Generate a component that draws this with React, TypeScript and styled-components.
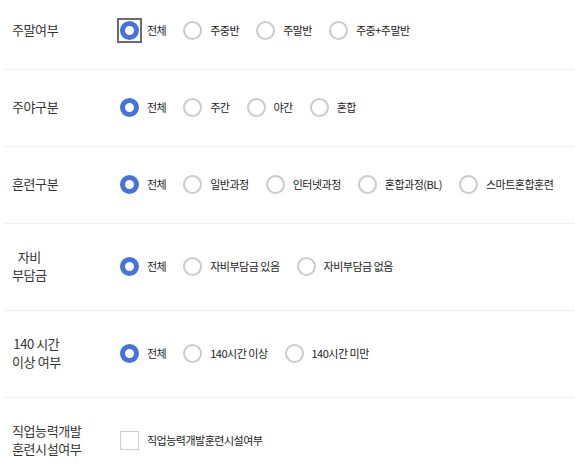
import { createGlobalStyle } from "styled-components";
import styled from "styled-components";
import { useState } from "react";

const GlobalStyle = createGlobalStyle`
  body {
    margin: 0;
    background: #fff;
    font-family: "Noto Sans CJK KR", "Noto Sans", sans-serif;
    color: #222;
  }
`

const Wrapper = styled.div`
  padding-left: 4px;
`

const Row = styled.div<{ $first?: boolean }>`
  display: flex;
  align-items: center;
  padding: ${p => (p.$first ? "17px" : "24px")} 0 26px 8px;
  border-bottom: 1px solid #efefef;
`

const Label = styled.div`
  display: flex;
  width: 108px;
  flex-shrink: 0;
`

const LabelText = styled.span`
  display: block;
  text-align: center;
  font-size: 13px;
  line-height: 18px;
  letter-spacing: -0.4px;
  color: #333;
  white-space: nowrap;
`

const Options = styled.div`
  display: flex;
  align-items: center;
  height: 26px;
`

const Option = styled.label`
  display: flex;
  align-items: center;
  flex-shrink: 0;
  margin-right: 17px;
  font-size: 11px;
  letter-spacing: -0.5px;
  white-space: nowrap;
  color: #1a1a1a;
  cursor: pointer;
`

const MarkBox = styled.span<{ $focused?: boolean }>`
  display: inline-flex;
  margin-right: 8px;
  outline: ${p => (p.$focused ? "2px solid #6b6b6b" : "none")};
  outline-offset: 1px;
`

const Radio = styled.input.attrs({ type: "radio" })`
  appearance: none;
  margin: 0;
  width: 19px;
  height: 19px;
  box-sizing: border-box;
  border-radius: 50%;
  border: 2px solid #cbcbcf;
  background: #fff;
  cursor: pointer;

  &:checked {
    border: 5px solid #4473dc;
  }
`

const Check = styled.input.attrs({ type: "checkbox" })`
  appearance: none;
  margin: 0;
  width: 19px;
  height: 19px;
  box-sizing: border-box;
  border: 1px solid #cfcfcf;
  background: #fff;
  cursor: pointer;
`

type Group = {
  name: string
  label: string[]
  options: string[]
}

const groups: Group[] = [
  { name: "weekend", label: ["주말여부"], options: ["전체", "주중반", "주말반", "주중+주말반"] },
  { name: "dayNight", label: ["주야구분"], options: ["전체", "주간", "야간", "혼합"] },
  { name: "training", label: ["훈련구분"], options: ["전체", "일반과정", "인터넷과정", "혼합과정(BL)", "스마트혼합훈련"] },
  { name: "selfPay", label: ["자비", "부담금"], options: ["전체", "자비부담금 있음", "자비부담금 없음"] },
  { name: "hours", label: ["140 시간", "이상 여부"], options: ["전체", "140시간 이상", "140시간 미만"] },
]

function RadioGroup({ group, focused }: { group: Group; focused: boolean }) {
  const [value, setValue] = useState(group.options[0])
  return (
    <Options>
      {group.options.map((opt, i) => (
        <Option key={opt}>
          <MarkBox $focused={focused && i === 0}>
            <Radio
              name={group.name}
              checked={value === opt}
              onChange={() => setValue(opt)}
            />
          </MarkBox>
          {opt}
        </Option>
      ))}
    </Options>
  )
}

export default function App() {
  return (
    <>
      <GlobalStyle />
      <Wrapper>
        {groups.map((g, i) => (
          <Row key={g.name} $first={i === 0}>
            <Label>
              <LabelText>
                {g.label.map((line, j) => (
                  <span key={line}>
                    {j > 0 && <br />}
                    {line}
                  </span>
                ))}
              </LabelText>
            </Label>
            <RadioGroup group={g} focused={i === 0} />
          </Row>
        ))}
        <Row>
          <Label>
            <LabelText>
              직업능력개발
              <br />
              훈련시설여부
            </LabelText>
          </Label>
          <Options>
            <Option>
              <MarkBox>
                <Check />
              </MarkBox>
              직업능력개발훈련시설여부
            </Option>
          </Options>
        </Row>
      </Wrapper>
    </>
  )
}
